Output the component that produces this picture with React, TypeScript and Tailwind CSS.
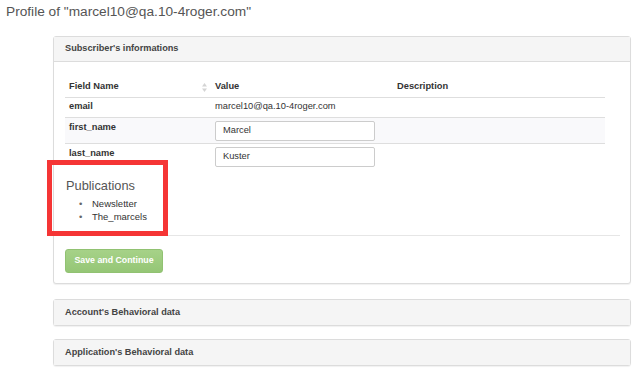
import React from 'react';

const rows = [
  { name: 'email', value: 'marcel10@qa.10-4roger.com', input: false },
  { name: 'first_name', value: 'Marcel', input: true },
  { name: 'last_name', value: 'Kuster', input: true },
];

function SortIcon() {
  return (
    <svg width="5" height="9" viewBox="0 0 5 9" className="absolute right-[4px] top-[6px]">
      <path d="M2.5 0 L5 3.5 L0 3.5 Z" fill="#d4d4d4" />
      <path d="M2.5 9 L5 5.5 L0 5.5 Z" fill="#d4d4d4" />
    </svg>
  );
}

function Panel({ title, children }: { title: string; children?: React.ReactNode }) {
  return (
    <div className="border border-[#dcdcdc] rounded-[3px] bg-white shadow-[0_1px_1px_rgba(0,0,0,0.06)]">
      <div
        className={`h-[25px] flex items-center px-[11px] bg-[#f5f5f5] text-[9.2px] font-bold text-[#444] ${
          children ? 'border-b border-[#dcdcdc]' : ''
        }`}
      >
        {title}
      </div>
      {children}
    </div>
  );
}

export default function App() {
  return (
    <div className="w-[638px] h-[377px] overflow-hidden bg-white font-['Liberation_Sans',Arial,sans-serif] text-[#333] relative">
      <h1 className="px-[6px] pt-[3px] text-[13.7px] leading-[18px] text-[#555] font-normal">
        Profile of "marcel10@qa.10-4roger.com"
      </h1>

      <div className="ml-[53px] w-[578px] mt-[15px] flex flex-col">
        <Panel title="Subscriber's informations">
          <div className="pl-[11px] pr-[10px] pt-[15px] pb-[10px]">
            <table className="w-[540px] border-collapse text-[9.3px] table-fixed">
              <colgroup>
                <col className="w-[146px]" />
                <col className="w-[182px]" />
                <col />
              </colgroup>
              <thead>
                <tr className="h-[20px] border-b border-[#dedede]">
                  <th className="relative text-left font-bold px-[4px] align-middle">
                    Field Name
                    <SortIcon />
                  </th>
                  <th className="text-left font-bold px-[4px] align-middle">Value</th>
                  <th className="text-left font-bold px-[4px] align-middle">Description</th>
                </tr>
              </thead>
              <tbody>
                {rows.map((r, i) => (
                  <tr
                    key={r.name}
                    className={`${r.input ? 'h-[26px]' : 'h-[20px]'} ${i === 1 ? 'bg-[#f9f9fb]' : ''} ${
                      i < rows.length - 1 ? 'border-b border-[#dedede]' : ''
                    }`}
                  >
                    <td className={`px-[4px] font-bold ${r.input ? 'align-top pt-[3px]' : 'align-middle'}`}>{r.name}</td>
                    <td className={`px-[4px] ${r.input ? 'align-top pt-[3px] pb-[2px]' : 'align-middle'}`}>
                      {r.input ? (
                        <div className="w-[160px] h-[20px] border border-[#cccccc] rounded-[2px] bg-white flex items-center pl-[7px]">
                          {r.value}
                        </div>
                      ) : (
                        r.value
                      )}
                    </td>
                    <td />
                  </tr>
                ))}
              </tbody>
            </table>

            <div className="mt-[9px] pl-[1px]">
              <h2 className="text-[12.8px] leading-[16px] text-[#555]">Publications</h2>
              <ul className="mt-[3px] text-[9.5px] leading-[13px] text-[#333]">
                <li className="flex items-center">
                  <span className="w-[26px] pl-[13px] text-[#666]">•</span>Newsletter
                </li>
                <li className="flex items-center">
                  <span className="w-[26px] pl-[13px] text-[#666]">•</span>The_marcels
                </li>
              </ul>
            </div>

            <div className="mt-[12px] border-t border-[#e6e6e6]" />

            <button className="mt-[13px] w-[98px] h-[24px] rounded-[3px] border border-[#91c272] bg-gradient-to-b from-[#a6d288] to-[#95c676] text-white text-[8.8px] font-bold">
              Save and Continue
            </button>
          </div>
        </Panel>

        <div className="mt-[15px]">
          <Panel title="Account's Behavioral data" />
        </div>
        <div className="mt-[13px]">
          <Panel title="Application's Behavioral data" />
        </div>
      </div>

      {/* annotation overlay */}
      <div className="absolute left-[47px] top-[160px] w-[121px] h-[76px] border-[5px] border-[#f53535]" />
    </div>
  );
}
